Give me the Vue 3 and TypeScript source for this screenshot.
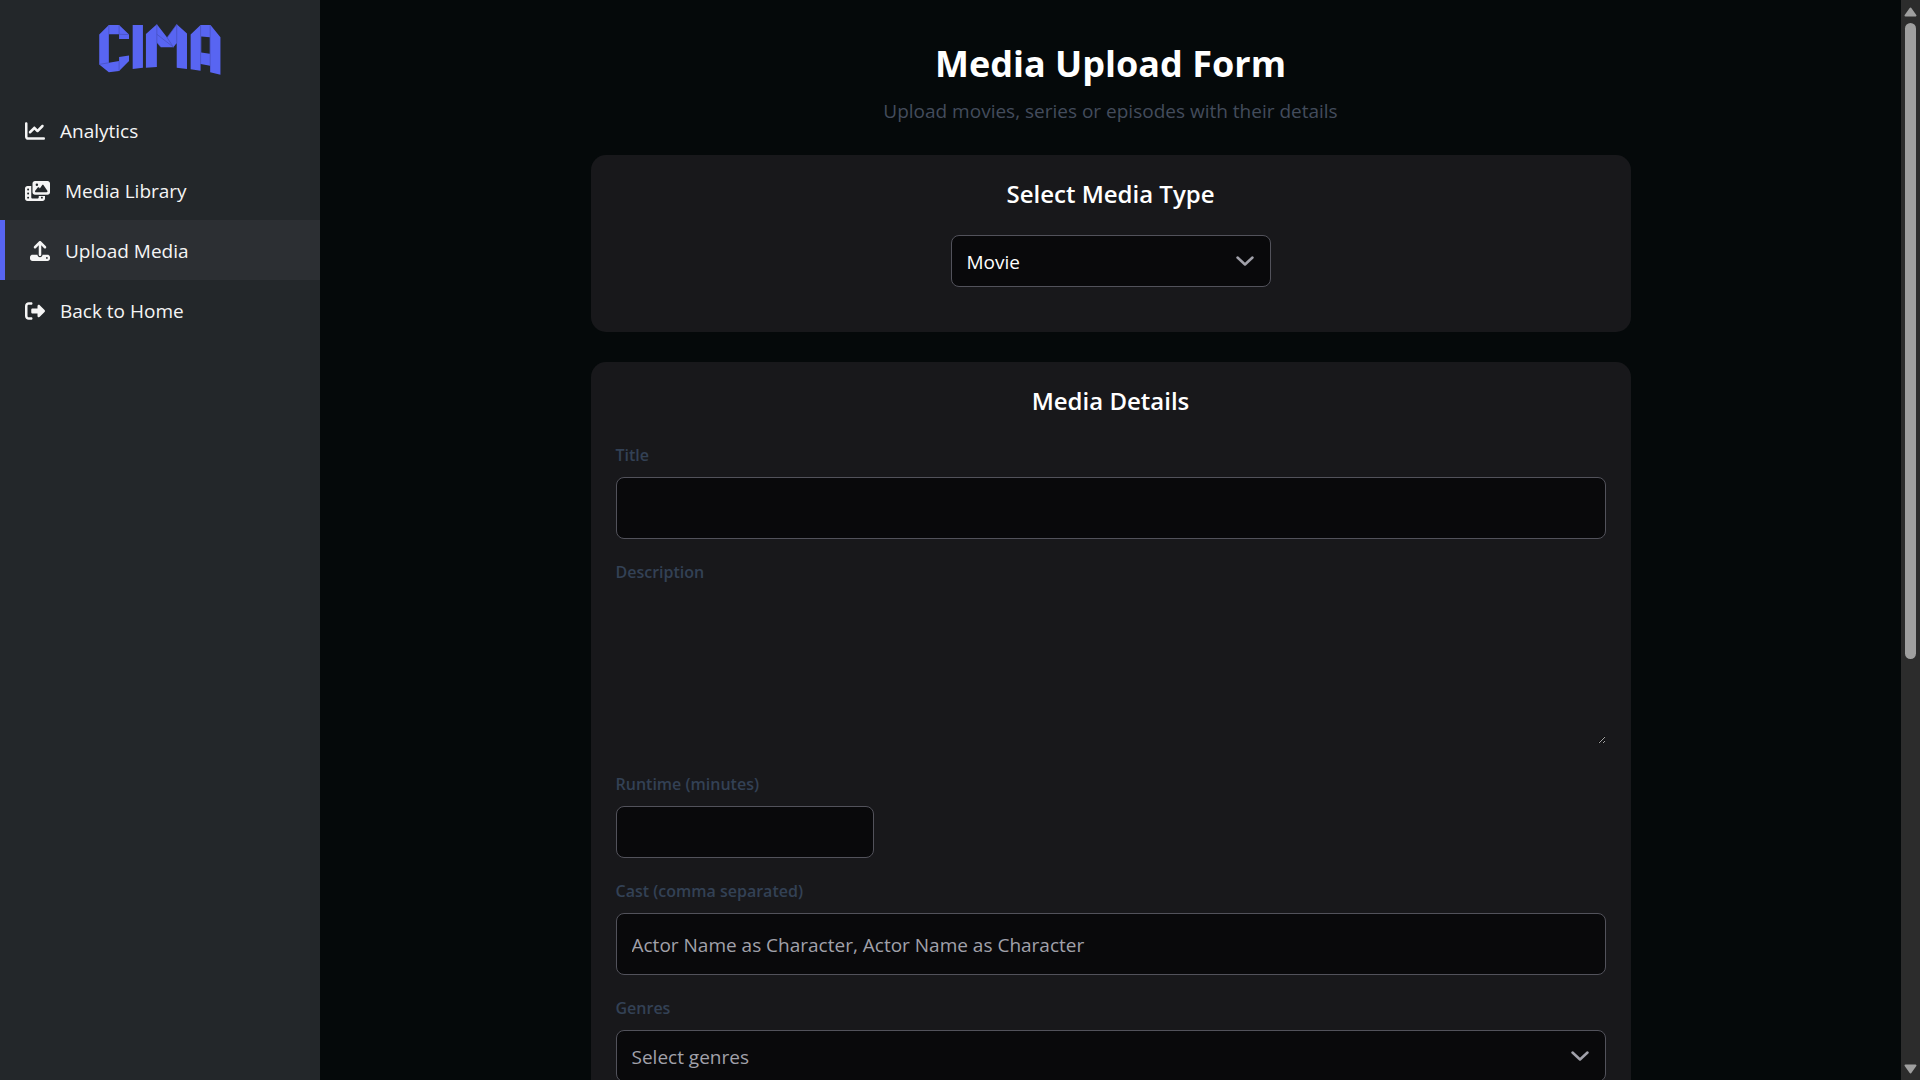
<script setup lang="ts">
import { onBeforeUnmount, onMounted, ref } from 'vue'

interface NavItem {
  label: string
  viewBox: string
  wide?: boolean
  active?: boolean
  path: string
}

const navItems: NavItem[] = [
  {
    label: 'Analytics',
    viewBox: '0 0 512 512',
    path: 'M64 64c0-17.700-14.300-32-32-32S0 46.300 0 64V400c0 44.200 35.800 80 80 80H480c17.700 0 32-14.300 32-32s-14.300-32-32-32H80c-8.800 0-16-7.200-16-16V64zm406.600 86.600c12.500-12.500 12.500-32.800 0-45.300s-32.800-12.500-45.300 0L320 210.700l-57.400-57.400c-12.500-12.500-32.800-12.500-45.300 0l-112 112c-12.500 12.500-12.500 32.800 0 45.300s32.800 12.500 45.300 0L240 221.300l57.400 57.400c12.500 12.500 32.800 12.500 45.300 0l128-128z',
  },
  {
    label: 'Media Library',
    viewBox: '0 0 640 512',
    wide: true,
    path: 'M256 0H576c35.300 0 64 28.700 64 64V288c0 35.300-28.700 64-64 64H256c-35.300 0-64-28.700-64-64V64c0-35.300 28.700-64 64-64zM476 106.700C471.500 100 464 96 456 96s-15.500 4-20 10.700l-56 84L362.700 169c-4.600-5.700-11.500-9-18.700-9s-14.200 3.300-18.700 9l-64 80c-5.800 7.200-6.900 17.100-2.900 25.400s12.400 13.600 21.600 13.600h80 48H552c8.900 0 17-4.900 21.200-12.700s3.700-17.300-1.200-24.600l-96-144zM336 96a32 32 0 1 0-64 0 32 32 0 1 0 64 0zM64 128h96V384v32c0 17.700 14.300 32 32 32H320c17.700 0 32-14.300 32-32V384H512v64c0 35.300-28.700 64-64 64H64c-35.300 0-64-28.700-64-64V192c0-35.300 28.700-64 64-64zm8 64c-8.800 0-16 7.200-16 16v16c0 8.800 7.200 16 16 16H88c8.800 0 16-7.200 16-16V208c0-8.800-7.200-16-16-16H72zm0 104c-8.800 0-16 7.200-16 16v16c0 8.800 7.200 16 16 16H88c8.800 0 16-7.200 16-16V312c0-8.800-7.200-16-16-16H72zm0 104c-8.800 0-16 7.200-16 16v16c0 8.800 7.200 16 16 16H88c8.800 0 16-7.200 16-16V416c0-8.800-7.200-16-16-16H72zm336 16v16c0 8.800 7.200 16 16 16h16c8.800 0 16-7.200 16-16V416c0-8.800-7.200-16-16-16H424c-8.800 0-16 7.200-16 16z',
  },
  {
    label: 'Upload Media',
    viewBox: '0 0 512 512',
    active: true,
    path: 'M288 109.300V352c0 17.700-14.300 32-32 32s-32-14.300-32-32V109.300l-73.400 73.400c-12.500 12.500-32.800 12.500-45.300 0s-12.500-32.800 0-45.300l128-128c12.500-12.500 32.800-12.500 45.300 0l128 128c12.500 12.500 12.500 32.800 0 45.300s-32.800 12.500-45.300 0L288 109.300zM64 352H192c0 35.300 28.700 64 64 64s64-28.700 64-64H448c35.300 0 64 28.700 64 64v32c0 35.300-28.700 64-64 64H64c-35.300 0-64-28.700-64-64V416c0-35.300 28.700-64 64-64zM432 456a24 24 0 1 0 0-48 24 24 0 1 0 0 48z',
  },
  {
    label: 'Back to Home',
    viewBox: '0 0 512 512',
    path: 'M377.900 105.900L500.700 228.700c7.200 7.200 11.300 17.100 11.300 27.300s-4.100 20.100-11.300 27.300L377.900 406.100c-6.400 6.400-15 9.900-24 9.900c-18.700 0-33.900-15.200-33.900-33.900l0-62.100-128 0c-17.700 0-32-14.300-32-32l0-64c0-17.700 14.300-32 32-32l128 0 0-62.100c0-18.700 15.200-33.900 33.900-33.900c9 0 17.600 3.600 24 9.900zM160 96L96 96c-17.700 0-32 14.300-32 32l0 256c0 17.700 14.300 32 32 32l64 0c17.700 0 32 14.300 32 32s-14.300 32-32 32l-64 0c-53 0-96-43-96-96L0 128C0 75 43 32 96 32l64 0c17.700 0 32 14.300 32 32s-14.300 32-32 32z',
  },
]

const mediaType = ref('Movie')
const genre = ref('')
const title = ref('')
const description = ref('')
const runtime = ref('')
const cast = ref('')

// Scroll position of the content pane, as percentages of the scrollbar track.
const content = ref<HTMLElement | null>(null)
const thumbTop = ref(0)
const thumbHeight = ref(0)

function syncThumb(): void {
  const pane = content.value
  if (!pane) return
  thumbTop.value = (pane.scrollTop / pane.scrollHeight) * 100
  thumbHeight.value = (pane.clientHeight / pane.scrollHeight) * 100
}

function scrollContent(distance: number): void {
  content.value?.scrollBy({ top: distance })
}

onMounted(() => {
  syncThumb()
  window.addEventListener('resize', syncThumb)
})
onBeforeUnmount(() => window.removeEventListener('resize', syncThumb))
</script>

<template>
  <div class="layout">
    <aside class="sidebar">
      <a class="brand" href="#" aria-label="CIMA">
        <svg class="logo" viewBox="57 42 367 154" aria-hidden="true">
          <g fill="#5865f2">
            <polygon points="57,74 86,45 117,45 147,74 147,87 117,87 117,73 86,73 86,159 117,154 117,142 147,137 147,154 117,184 86,188 57,164" />
            <polygon points="158,45 189,45 189,174 158,178" />
            <polygon points="198,72 231,43 262,83 291,43 322,71 322,178 291,174 291,99 281,112 243,112 231,98 231,172 198,174" />
            <polygon points="333,74 363,45 393,45 423,82 423,195 392,188 392,168 363,163 363,183 333,179" />
          </g>
          <polygon points="365,80 391,82 391,132 365,128" fill="#23272a" />
          <g fill="none" stroke="#444db8" stroke-width="2">
            <path d="M86 45V73M117 45V73M117 73L147 74M57 164L86 159M117 154V184M231 43V98M231 98L243 112M291 43L262 83L281 112M291 43V99M231 73L281 112M363 45V163M392 45V168" />
          </g>
        </svg>
      </a>
      <nav class="nav" aria-label="Main">
        <a
          v-for="item in navItems"
          :key="item.label"
          href="#"
          class="nav-item"
          :class="{ active: item.active }"
          :aria-current="item.active ? 'page' : undefined"
        >
          <svg class="nav-icon" :class="{ wide: item.wide }" :viewBox="item.viewBox" aria-hidden="true">
            <path :d="item.path" fill="currentColor" fill-rule="evenodd" />
          </svg>
          <span>{{ item.label }}</span>
        </a>
      </nav>
    </aside>

    <main ref="content" class="content" @scroll="syncThumb">
      <form class="form" @submit.prevent>
        <header class="heading">
          <h1>Media Upload Form</h1>
          <p>Upload movies, series or episodes with their details</p>
        </header>

        <section class="card">
          <h2 id="type-heading">Select Media Type</h2>
          <div class="field picker">
            <div class="select-wrap">
              <select v-model="mediaType" class="control" aria-labelledby="type-heading">
                <option>Movie</option>
                <option>Series</option>
                <option>Episode</option>
              </select>
              <svg class="chevron" viewBox="0 0 18 18" aria-hidden="true"><path d="M1.500 5.500L9 12.500L16.500 5.500" /></svg>
            </div>
          </div>
        </section>

        <section class="card details">
          <h2>Media Details</h2>
          <div class="field">
            <label for="title">Title</label>
            <input id="title" v-model="title" class="control tall" type="text" />
          </div>
          <div class="field">
            <label for="description">Description</label>
            <textarea id="description" v-model="description" class="description"></textarea>
          </div>
          <div class="field">
            <label for="runtime">Runtime (minutes)</label>
            <input id="runtime" v-model="runtime" class="control short" type="text" inputmode="numeric" />
          </div>
          <div class="field">
            <label for="cast">Cast (comma separated)</label>
            <input id="cast" v-model="cast" class="control tall" type="text" placeholder="Actor Name as Character, Actor Name as Character" />
          </div>
          <div class="field">
            <label for="genres">Genres</label>
            <div class="select-wrap">
              <select id="genres" v-model="genre" class="control" :class="{ empty: !genre }">
                <option value="" disabled>Select genres</option>
                <option>Action</option>
                <option>Comedy</option>
                <option>Drama</option>
              </select>
              <svg class="chevron" viewBox="0 0 18 18" aria-hidden="true"><path d="M1.500 5.500L9 12.500L16.500 5.500" /></svg>
            </div>
          </div>
        </section>
      </form>
    </main>

    <div class="scrollbar">
      <button class="scroll-button" type="button" tabindex="-1" aria-label="Scroll up" @click="scrollContent(-60)">
        <svg viewBox="0 0 13 10" aria-hidden="true"><path d="M6.500 1.500L11.500 8.500H1.500Z" /></svg>
      </button>
      <div class="track">
        <div class="thumb" :style="{ marginTop: '0', top: thumbTop + '%', height: thumbHeight + '%' }"></div>
      </div>
      <button class="scroll-button" type="button" tabindex="-1" aria-label="Scroll down" @click="scrollContent(60)">
        <svg viewBox="0 0 13 10" aria-hidden="true"><path d="M6.500 8.500L11.500 1.500H1.500Z" /></svg>
      </button>
    </div>
  </div>
</template>

<style>
body {
  margin: 0;
  background: #05090a;
}
</style>

<style scoped>
* {
  box-sizing: border-box;
}

.layout {
  display: flex;
  height: 100vh;
  background: #05090a;
  color: #ffffff;
  font-family: "Open Sans", "Noto Sans", sans-serif;
  font-size: 19px;
  line-height: 30px;
}

.sidebar {
  flex: 0 0 320px;
  background: #23272a;
}

.brand {
  display: flex;
  align-items: center;
  justify-content: center;
  height: 100px;
  padding-bottom: 2px;
}

.logo {
  width: 122px;
  height: 51px;
}

.nav {
  display: flex;
  flex-direction: column;
}

.nav-item {
  display: flex;
  align-items: center;
  gap: 15px;
  height: 60px;
  padding: 2px 25px 0;
  color: #f5f5f5;
  text-decoration: none;
}

.nav-item.active {
  border-left: 5px solid #5865f2;
  background: #2c2f33;
}

.nav-icon {
  width: 20px;
  height: 20px;
}

.nav-icon.wide {
  width: 25px;
}

.content {
  flex: 1;
  min-width: 0;
  overflow-y: auto;
  scrollbar-width: none;
}

.scrollbar {
  display: flex;
  flex: 0 0 19px;
  flex-direction: column;
  background: #2c2c2c;
}

.scroll-button {
  display: flex;
  align-items: center;
  justify-content: center;
  height: 23px;
  padding: 0;
  border: 0;
  background: transparent;
}

.scroll-button svg {
  width: 13px;
  height: 10px;
  fill: #9f9f9f;
  stroke: #9f9f9f;
  stroke-width: 2;
  stroke-linejoin: round;
}

.track {
  position: relative;
  flex: 1;
}

.thumb {
  position: absolute;
  right: 4px;
  left: 4px;
  border-radius: 6px;
  background: #9f9f9f;
}

.form {
  width: 100%;
  max-width: 1040px;
  margin: 0 auto;
  padding: 40px 0;
}

.heading {
  margin-bottom: 29px;
  text-align: center;
}

h1 {
  margin: 0 0 8px;
  font-size: 36px;
  font-weight: 700;
  line-height: 48px;
}

.heading p {
  margin: 0;
  color: #434c5c;
}

.card {
  margin-bottom: 30px;
  padding: 25px;
  border-radius: 15px;
  background: #18181b;
}

.details {
  min-height: 1324px;
}

h2 {
  margin: 0 0 27px;
  font-size: 24px;
  font-weight: 600;
  line-height: 28px;
  text-align: center;
}

.field {
  display: flex;
  flex-direction: column;
  gap: 8px;
  margin-bottom: 20px;
}

.picker {
  width: 320px;
  margin-right: auto;
  margin-left: auto;
}

label {
  align-self: flex-start;
  color: #334155;
  font-size: 16px;
  font-weight: 600;
  line-height: 27px;
}

.control {
  width: 100%;
  height: 52px;
  padding: 2px 15px 0;
  border: 1px solid #52525b;
  border-radius: 8px;
  outline: none;
  appearance: none;
  background: #09090b;
  color: #ffffff;
  font: inherit;
}

.control.tall {
  height: 62px;
}

.control.short {
  width: 258px;
}

.control::placeholder,
.control.empty {
  color: #a1a1aa;
}

.description {
  width: 100%;
  height: 150px;
  margin-bottom: 7px;
  padding: 15px;
  border: 0;
  outline: none;
  background: transparent;
  color: #ffffff;
  color-scheme: dark;
  font: inherit;
}

.select-wrap {
  display: grid;
  align-items: center;
}

.select-wrap > * {
  grid-area: 1 / 1;
}

.chevron {
  justify-self: end;
  width: 18px;
  height: 18px;
  margin-right: 17px;
  fill: none;
  stroke: #a1a1aa;
  stroke-width: 2.5;
  stroke-linecap: round;
  stroke-linejoin: round;
  pointer-events: none;
}
</style>
